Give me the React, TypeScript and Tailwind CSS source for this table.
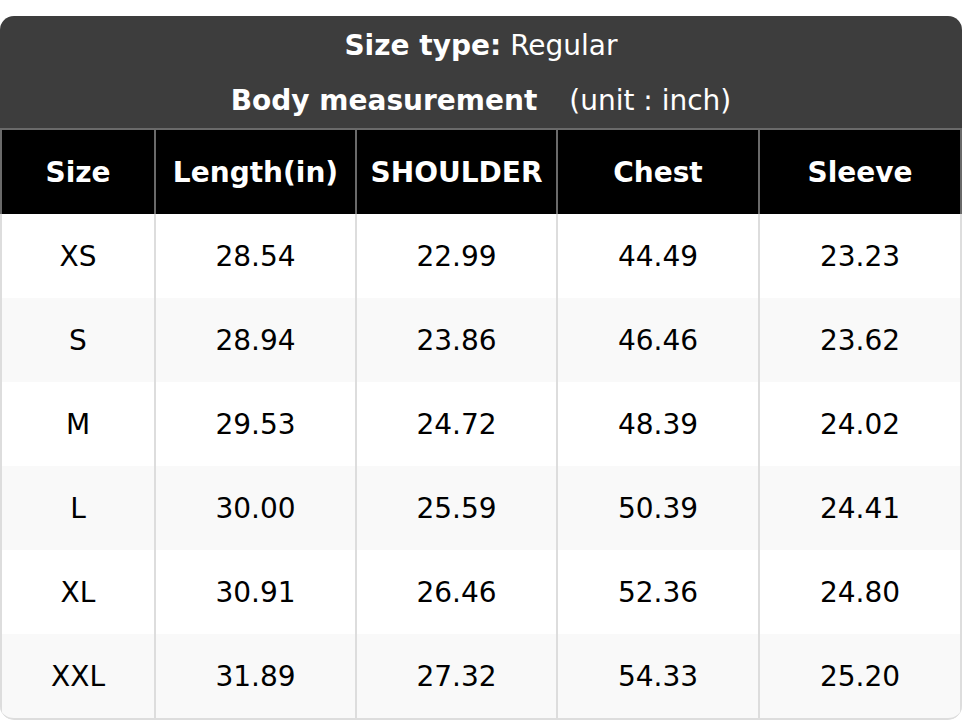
import React from "react";

const headers = ["Size", "Length(in)", "SHOULDER", "Chest", "Sleeve"];

const rows = [
  ["XS", "28.54", "22.99", "44.49", "23.23"],
  ["S", "28.94", "23.86", "46.46", "23.62"],
  ["M", "29.53", "24.72", "48.39", "24.02"],
  ["L", "30.00", "25.59", "50.39", "24.41"],
  ["XL", "30.91", "26.46", "52.36", "24.80"],
  ["XXL", "31.89", "27.32", "54.33", "25.20"],
];

const cols = "grid grid-cols-[156px_201px_201px_202px_202px]";

export default function App() {
  return (
    <div
      className="w-[962px] bg-white pt-4"
      style={{ fontFamily: '"DejaVu Sans", sans-serif' }}
    >
      <div className="overflow-hidden rounded-[14px]">
        <div className="flex h-[112px] flex-col items-center justify-center bg-[#3d3d3d] pt-[2px] text-[28px] text-white">
          <div className="flex h-[55px] items-center">
            <span className="font-bold">Size type:</span>
            <span className="ml-[9px]">Regular</span>
          </div>
          <div className="flex h-[55px] items-center">
            <span className="font-bold">Body measurement</span>
            <span className="ml-[32px]">(unit : inch)</span>
          </div>
        </div>

        <div className={`${cols} h-[86px] border-t-2 border-[#6a6a6a] bg-black text-[28px] font-bold text-white`}>
          {headers.map((h, i) => (
            <div
              key={h}
              className={`flex items-center justify-center border-r-2 border-[#6a6a6a] pt-[2px] ${i === 0 ? "border-l-2" : ""}`}
            >
              {h}
            </div>
          ))}
        </div>

        {rows.map((r, ri) => (
          <div
            key={r[0]}
            className={`${cols} h-[84px] text-[28px] text-black ${ri % 2 ? "bg-[#f9f9f9]" : "bg-white"} ${ri === rows.length - 1 ? "h-[86px] rounded-b-[14px] border-b-2 border-[#dddddd]" : ""}`}
          >
            {r.map((c, ci) => (
              <div
                key={ci}
                className={`flex items-center justify-center border-r-2 border-[#dddddd] pt-[2px] ${ci === 0 ? "border-l-2" : ""}`}
              >
                {c}
              </div>
            ))}
          </div>
        ))}
      </div>
    </div>
  );
}
